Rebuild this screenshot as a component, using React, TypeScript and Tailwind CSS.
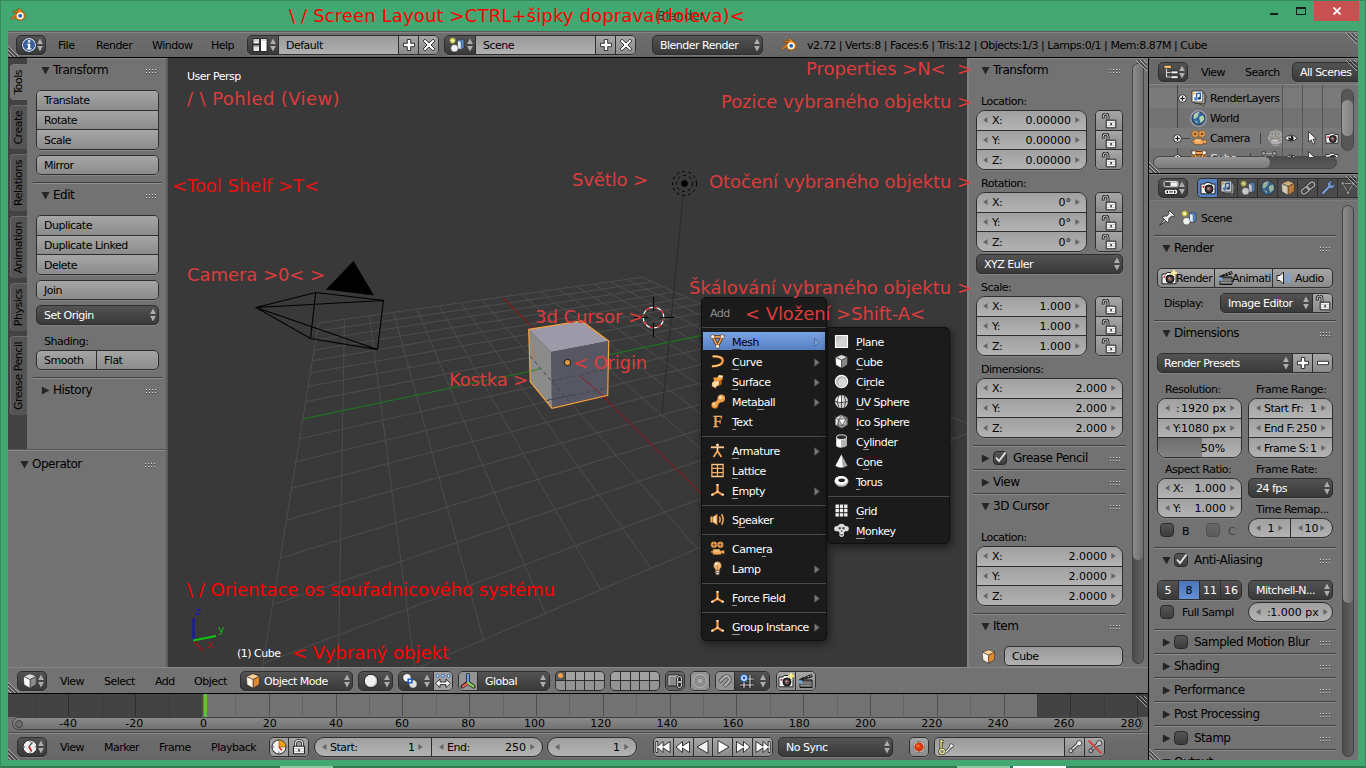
import React, { useLayoutEffect, useRef, useState } from "react";
import clsx from "clsx";

type Kids = { children?: React.ReactNode };

/* ---------- text ---------- */

/* Spreads a line of text over an exact width by measuring it and adjusting the tracking. */
function Fit({ text, w, className }: { text: string; w: number; className?: string }) {
  const ref = useRef<HTMLSpanElement>(null);
  const [ls, setLs] = useState(0);
  useLayoutEffect(() => {
    const el = ref.current;
    if (!el) return;
    el.style.letterSpacing = "0px";
    const natural = el.getBoundingClientRect().width;
    const n = (w - natural) / text.length;
    el.style.letterSpacing = `${n}px`;
    setLs(n);
  }, [text, w]);
  return (
    <span ref={ref} className={clsx("inline-block whitespace-pre", className)} style={{ letterSpacing: `${ls}px` }}>
      {text}
    </span>
  );
}

/* Interface label, set tight; sits one pixel under the optical centre of its row. */
const T = ({ children, className }: Kids & { className?: string }) => (
  <span className={clsx("pt-[2px] whitespace-pre tracking-[-0.5px]", className)}>{children}</span>
);
/* Digits keep their natural advance. */
const N = ({ children, className }: Kids & { className?: string }) => (
  <span className={clsx("pt-[2px] whitespace-pre", className)}>{children}</span>
);

/* ---------- icons ---------- */

const cubeIcon = (a: string, b: string, c: string) => (
  <g stroke="#1a1a1a" strokeWidth=".5" strokeLinejoin="round">
    <path d="M8 .8 14.6 3.2 8.2 6.6 1.4 3.4Z" fill={a} />
    <path d="M1.4 3.4 8.2 6.6V15.2L2 11.8Z" fill={b} />
    <path d="M14.6 3.2 8.2 6.6V15.2L14.2 11.6Z" fill={c} />
  </g>
);

const camBody = (
  <g>
    <path d="M1 4H5L6 2.5H10L11 4H15V13.8H1Z" fill="#f2f2f2" stroke="#222" strokeWidth="1" />
    <path d="M1.5 5.5H14.5V7H1.5Z" fill="#c8c8c8" />
    <circle cx="9" cy="9" r="4" fill="#333" stroke="#111" />
    <circle cx="9" cy="9" r="2" fill="#8a5a5a" />
    <circle cx="8.2" cy="8.2" r=".8" fill="#e6d0d0" />
    <circle cx="3.5" cy="7" r="1" fill="#d22" />
  </g>
);

const clap = (
  <g>
    <path d="M2 7H14V14.5H2Z" fill="#666" stroke="#111" />
    <path d="M2 10H14M2 12.5H14" stroke="#999" strokeWidth=".8" />
    <path d="M1.5 6.5 13.5 1.5 14.2 3.8 2 7Z" fill="#eee" stroke="#111" />
    <path d="M4.5 5.2 6 6M8 3.8 9.5 5M11 2.5 12.5 4" stroke="#111" strokeWidth="1.4" />
    <circle cx="2.5" cy="9" r="2" fill="#7ab4f0" opacity=".8" />
  </g>
);

const empty = (
  <g strokeLinecap="butt">
    <path d="M8 1V9.3L1.6 13.2M8 9.3 14.4 13.2" stroke="#6a3206" strokeWidth="3" fill="none" />
    <path d="M8 1V9.3L1.8 13M8 9.3 14.2 13" stroke="#f9a14a" strokeWidth="2" fill="none" />
    <path d="M7 1H9V3H7ZM1 12 3 10.8 3.8 12.6 1.8 13.8ZM15 12 13 10.8 12.2 12.6 14.2 13.8ZM7 8.2H9V10H7Z" fill="#fff0dc" />
  </g>
);

const movie = (f: string, hole: string) => (
  <g fill={f} stroke="#3a2205" strokeWidth=".4">
    <circle cx="4.2" cy="4" r="3.4" />
    <circle cx="11" cy="4" r="3.4" />
    <path d="M3 8.6H10.8V10.4H12L15.4 9.6V14L12 12.8V14.6H3L3 12.6H1V10.6H3Z" />
    <path d="M4.2 1.6V6.4M1.9 4H6.5M11 1.6V6.4M8.7 4H13.3" stroke={hole} strokeWidth=".7" />
    <circle cx="4.2" cy="4" r="1" fill={hole} stroke="none" />
    <circle cx="11" cy="4" r="1" fill={hole} stroke="none" />
    <path d="M4.5 10H9.5V11.2H4.5Z" fill="#fff" opacity=".45" stroke="none" />
  </g>
);

const sceneIcon = (
  <g stroke="#222" strokeWidth=".5">
    <path d="M8.5 3.5 11 2 15 3V10.8L12.2 12.5 8.5 11.5Z" fill="#4f86d0" />
    <path d="M8.5 3.5 12.2 4.6V12.5L8.5 11.5Z" fill="#e3eefc" />
    <circle cx="5.5" cy="11.2" r="3.8" fill="#f0f0f0" />
    <circle cx="3.6" cy="3.6" r="2.8" fill="#d8d450" stroke="#8a8a30" />
    <circle cx="3.6" cy="3.6" r="1.2" fill="#fffff0" stroke="none" />
  </g>
);

const worldIcon = (
  <g>
    <circle cx="8" cy="8" r="7" fill="#2f66a0" stroke="#222" strokeWidth=".8" />
    <path d="M3 5Q6 1.5 8.5 3L7 6 4.5 8.5 2.4 8Z" fill="#a8cfae" />
    <path d="M9 6 13 4.5 14.2 9 10.5 12.8 9 9Z" fill="#b3d8ae" />
    <path d="M4 10 7 11 6.5 13.7Z" fill="#9cc8a0" />
    <path d="M3.2 4.6A6 6 0 0 1 9 1.8" stroke="#fff" strokeWidth="1.2" fill="none" opacity=".7" />
  </g>
);

const layersIcon = (
  <g stroke="#222" strokeWidth=".8">
    <path d="M6 4 15.4 6 13 15.4 4 12.5Z" fill="#dfc98e" />
    <path d="M4 3H13.8V13.4H4Z" fill="#d0d0d0" />
    <path d="M1 1H11.8V12H1Z" fill="#f8f8f8" />
    <path d="M5.6 8.6V3.6L9.4 3V8" stroke="#2f62a8" strokeWidth="1.4" fill="none" />
    <circle cx="4.8" cy="8.8" r="1.9" fill="#4f86d0" stroke="none" />
    <circle cx="8.4" cy="8.2" r="1.5" fill="#2a3d55" stroke="none" />
    <path d="M2.6 2V5M1.4 3.5H4" stroke="#e4b83a" strokeWidth=".9" />
  </g>
);

const arrowsH = (
  <g>
    <circle cx="2.5" cy="2.8" r="1.5" fill="#dce9fb" stroke="#2f66b8" />
    <circle cx="8" cy="2.8" r="1.5" fill="#dce9fb" stroke="#2f66b8" />
    <circle cx="13.5" cy="2.8" r="1.5" fill="#dce9fb" stroke="#2f66b8" />
    <path d="M.6 10.3 5 6V9H11V6L15.4 10.3 11 14.6V11.6H5V14.6Z" fill="#fff" stroke="#222" strokeWidth=".9" />
  </g>
);

const plusBadge = (
  <g>
    <circle cx="13" cy="3" r="2.8" fill="#f4c83c" opacity=".7" />
    <path d="M13 0V6M10 3H16" stroke="#fff3b0" strokeWidth="1.6" />
  </g>
);

const ICONS: Record<string, React.ReactNode> = {
  info: (
    <g>
      <circle cx="8" cy="8" r="6.6" fill="#3d6299" stroke="#e4e9f2" strokeWidth="1.1" />
      <circle cx="8" cy="8" r="7.4" fill="none" stroke="#1c2430" strokeWidth=".7" />
      <path d="M6.2 6.8H9.2V11.2H10.4V12.6H5.8V11.2H7V8.1H6.2ZM7 3.2H9.2V5.6H7Z" fill="#fff" />
    </g>
  ),
  layout: (
    <g stroke="#111" strokeWidth=".8">
      <path d="M1 1.5H7.5V7H1ZM1 8H7.5V14.5H1Z" fill="#e6e6e6" />
      <path d="M8.5 1.5H15V14.5H8.5Z" fill="#fff" />
      <path d="M2 3H6.5M2 9.5H6.5M9.5 3H14" stroke="#999" />
    </g>
  ),
  scene: sceneIcon,
  world: worldIcon,
  layers: layersIcon,
  plus: <path d="M6.3 2.5H9.7V6.3H13.5V9.7H9.7V13.5H6.3V9.7H2.5V6.3H6.3Z" fill="#fff" stroke="#333" strokeWidth="1" />,
  minus: <path d="M2.5 6.3H13.5V9.7H2.5Z" fill="#fff" stroke="#333" strokeWidth="1" />,
  x: <path d="M4 2.2 8 6 12 2.2 13.9 4 10 8 13.9 12 12 13.8 8 10 4 13.8 2.1 12 6 8 2.1 4Z" fill="#fff" stroke="#333" strokeWidth="1" />,
  blender: (
    <g>
      <path d="M.5 11.6 7.5 5.5H2.8L3.6 4H8.6L7 2.4 9 1.4 14.6 6.2Q16.4 9.5 14 12 10.5 14.6 7 12.6 5.4 11.4 5.3 9.6L2.2 12.4Z" fill="#f28a1c" stroke="#7a3d05" strokeWidth=".6" />
      <circle cx="10.2" cy="8.8" r="3.4" fill="#fff" />
      <circle cx="10.2" cy="8.8" r="1.9" fill="#245a9c" />
    </g>
  ),
  tree: (
    <g>
      <path d="M3.5 4V13H8M3.5 8.5H8" stroke="#ccc" fill="none" strokeWidth="1.2" />
      <path d="M1 1.2H8.5V4.4H1Z" fill="#fbc077" stroke="#222" strokeWidth=".7" />
      <path d="M8 7H15V9.8H8ZM8 11.8H15V14.6H8Z" fill="#f4f4f4" stroke="#222" strokeWidth=".7" />
    </g>
  ),
  props: (
    <g>
      <rect x="1" y="1.5" width="14" height="5.2" rx="1.5" fill="#444" stroke="#ddd" />
      <path d="M7.5 2.2H14.2V6H7.5Z" fill="#eee" />
      <rect x="1" y="9.2" width="14" height="5.4" rx="2.7" fill="#f2f2f2" stroke="#111" />
      <path d="M2.8 11.9 5 10.4V13.4ZM13.2 11.9 11 10.4V13.4Z" fill="#222" />
      <path d="M6 11.9H10" stroke="#222" />
    </g>
  ),
  camera: camBody,
  cameraAdd: <g>{camBody}{plusBadge}</g>,
  clap,
  speaker: (
    <g>
      <path d="M1 5.5H4L7.5 2V14L4 10.5H1Z" fill="#f2f2f2" stroke="#222" />
      <path d="M9.5 5.2Q11 8 9.5 10.8M12 3Q15 8 12 13" stroke="#7aa4dc" strokeWidth="1.8" fill="none" />
    </g>
  ),
  cubeO: cubeIcon("#fbcf96", "#fff2e0", "#dd8a33"),
  cubeW: cubeIcon("#dcdcdc", "#fdfdfd", "#8a8a8a"),
  link: (
    <g fill="none">
      <rect x="1" y="8" width="8.6" height="5" rx="2.5" transform="rotate(-40 5.3 10.5)" stroke="#222" strokeWidth="2.8" />
      <rect x="6.4" y="3.2" width="8.6" height="5" rx="2.5" transform="rotate(-40 10.7 5.7)" stroke="#222" strokeWidth="2.8" />
      <rect x="1" y="8" width="8.6" height="5" rx="2.5" transform="rotate(-40 5.3 10.5)" stroke="#ccc" strokeWidth="1.4" />
      <rect x="6.4" y="3.2" width="8.6" height="5" rx="2.5" transform="rotate(-40 10.7 5.7)" stroke="#ccc" strokeWidth="1.4" />
    </g>
  ),
  wrench: <path d="M1.4 12.4 7.4 6.6Q6.6 3 9.8 1L12.6 1 10.6 4 12.2 5.6 15 3.6Q15.6 7.8 11.6 8.6L9.4 8.6 3.8 14.6Q.8 15 1.4 12.4Z" fill="#86aef0" stroke="#1c2a44" strokeWidth=".8" />,
  meshG: (
    <g>
      <path d="M2.5 3.5H13.5L8 12.5Z" fill="none" stroke="#aaa" />
      <path d="M1 1.8H4.2V5H1ZM11.8 1.8H15V5H11.8ZM6.4 11H9.6V14.2H6.4Z" fill="#bbb" stroke="#222" strokeWidth=".7" />
    </g>
  ),
  pin: (
    <g stroke="#222" strokeWidth=".8">
      <path d="M.6 15.4 6 8.6 7.8 10.4Z" fill="#ddd" />
      <path d="M3 7Q6 5.6 7.6 6.2L10.2 3.4 9 1.4 11 1 15.2 5.2 14.8 7 12.6 6 9.8 8.6Q10.4 11.4 9 13Z" fill="#efefef" />
    </g>
  ),
  lockOpen: (
    <g>
      <path d="M2.2 5.5V3.4A2.4 2.4 0 0 1 7 3.4V8" stroke="#222" strokeWidth="2.8" fill="none" />
      <path d="M2.2 4.8V3.4A2.4 2.4 0 0 1 7 3.4V8" stroke="#ddd" strokeWidth="1" fill="none" />
      <path d="M5.2 7.2H14.8V14.8H5.2Z" fill="#f4f4f4" stroke="#222" />
      <path d="M6 9.6H14M6 12.4H14" stroke="#bdbdbd" strokeWidth=".8" />
      <path d="M9.4 10H10.8V12.2H9.4Z" fill="#222" />
    </g>
  ),
  lock: (
    <g>
      <path d="M4.5 8V4.8A3.4 3.4 0 0 1 11.5 4.8V8" stroke="#222" strokeWidth="2.8" fill="none" />
      <path d="M4.5 8V4.8A3.4 3.4 0 0 1 11.5 4.8V8" stroke="#ddd" strokeWidth="1.2" fill="none" />
      <path d="M2.5 7.2H13.5V14.8H2.5Z" fill="#f0f0f0" stroke="#222" />
      <path d="M3 9.6H13M3 12.4H13" stroke="#bdbdbd" strokeWidth=".8" />
      <path d="M7.3 10H8.7V12.4H7.3Z" fill="#222" />
    </g>
  ),
  sphere: (
    <g>
      <circle cx="8" cy="8" r="6.8" fill="#b5b5b5" stroke="#111" strokeWidth=".8" />
      <circle cx="7.6" cy="7.6" r="5.6" fill="#f0f0f0" />
    </g>
  ),
  pivot: (
    <g stroke="#222" strokeWidth=".7">
      <circle cx="5" cy="4.8" r="4.2" fill="#f4f4f4" />
      <circle cx="11" cy="11" r="4.2" fill="#e2e2e2" />
      <path d="M5.4 5.4H10.6V10.6H5.4Z" fill="#1c62c4" stroke="none" />
      <path d="M7 7H9V9H7Z" fill="#fff" stroke="none" />
    </g>
  ),
  arrowsH,
  axes: (
    <g fill="none" strokeLinecap="round">
      <path d="M8 2V9.5L2.5 13.5M8 9.5 13.5 13.5" stroke="#1a1a1a" strokeWidth="4" />
      <path d="M8 2V9" stroke="#6fa3e8" strokeWidth="2.4" />
      <path d="M8 10 2.8 13.4" stroke="#e25b50" strokeWidth="2.4" />
      <path d="M8.4 10 13.4 13.4" stroke="#8ccf5c" strokeWidth="2.4" />
    </g>
  ),
  lockCam: (
    <g>
      <path d="M1 2H12.4V13H1Z" fill="#8a8a8a" stroke="#222" />
      <path d="M2 12.4V3H12" fill="none" stroke="#c4c4c4" />
      <rect x="10.5" y="3.5" width="4" height="6" rx="2" fill="none" stroke="#222" strokeWidth="2.4" />
      <rect x="10.5" y="8.5" width="4" height="6" rx="2" fill="none" stroke="#222" strokeWidth="2.4" />
      <rect x="10.5" y="3.5" width="4" height="6" rx="2" fill="none" stroke="#ddd" strokeWidth="1" />
      <rect x="10.5" y="8.5" width="4" height="6" rx="2" fill="none" stroke="#ddd" strokeWidth="1" />
    </g>
  ),
  propEdit: (
    <g fill="none" stroke="#b8b8b8">
      <circle cx="8" cy="8" r="6.4" />
      <circle cx="8" cy="8" r="5.2" stroke="#777" strokeWidth=".8" />
      <circle cx="8" cy="8" r="3" fill="#aaa" stroke="#777" strokeWidth=".8" />
    </g>
  ),
  magnet: (
    <g fill="none" transform="rotate(45 8 8)">
      <path d="M4.5 13.5V6.5A3.5 3.5 0 0 1 11.5 6.5V13.5" stroke="#4a4a4a" strokeWidth="4.2" />
      <path d="M4.5 13V6.5A3.5 3.5 0 0 1 11.5 6.5V13" stroke="#b0b0b0" strokeWidth="2.4" />
    </g>
  ),
  snap: (
    <g>
      <path d="M5 2V15M11 2V15M1 6H15M1 12H15" stroke="#111" strokeWidth="2.6" />
      <path d="M5 2V15M11 2V15M1 6H15M1 12H15" stroke="#ddd" strokeWidth="1.2" />
      <circle cx="5" cy="5" r="3.6" fill="#cfe0fa" stroke="#2b66c0" strokeWidth="1.2" />
      <circle cx="5" cy="5" r="1.4" fill="#1c52b4" />
    </g>
  ),
  clock: (
    <g>
      <circle cx="8" cy="8" r="7" fill="#f0f0f0" stroke="#222" />
      <path d="M10.6 3 7 7.6 9.6 12.4" stroke="#555" strokeWidth="1.3" fill="none" />
      <path d="M7 7.6 9.6 12.4" stroke="#d22" strokeWidth="1.6" />
      <path d="M8 1.8V3.3M8 12.7V14.2M1.8 8H3.3M12.7 8H14.2" stroke="#666" />
    </g>
  ),
  clockO: (
    <g>
      <circle cx="8" cy="8" r="7" fill="#f4f4f4" stroke="#222" />
      <path d="M8 8V1.2A6.8 6.8 0 0 1 14.8 8Z" fill="#f6a21c" stroke="#8a5606" strokeWidth=".7" />
      <path d="M8 8 11 11.5" stroke="#d22" strokeWidth="1.5" />
      <path d="M8 12.5V14M2 8H3.5" stroke="#666" />
    </g>
  ),
  first: <path d="M.8 2.5H2.8V7.2L8 2.5V7.2L15 2.5V13.5L8 8.8V13.5L2.8 8.8V13.5H.8Z" fill="#fff" stroke="#222" strokeWidth=".9" />,
  prev: <path d="M1 8 7.5 2.5V7L14.5 2.5V13.5L7.5 9V13.5Z" fill="#fff" stroke="#222" strokeWidth=".9" />,
  back: <path d="M2 8 13 1.5V14.5Z" fill="#f0f0f0" stroke="#222" strokeWidth=".9" />,
  play: <path d="M14 8 3 1.5V14.5Z" fill="#fff" stroke="#222" strokeWidth=".9" />,
  next: <path d="M15 8 8.5 2.5V7L1.5 2.5V13.5L8.5 9V13.5Z" fill="#fff" stroke="#222" strokeWidth=".9" />,
  last: <path d="M15.2 2.5H13.2V7.2L8 2.5V7.2L1 2.5V13.5L8 8.8V13.5L13.2 8.8V13.5H15.2Z" fill="#fff" stroke="#222" strokeWidth=".9" />,
  rec: (
    <g>
      <circle cx="8" cy="8" r="5.6" fill="#fff" stroke="#555" strokeWidth=".6" />
      <circle cx="8" cy="8" r="4.4" fill="#dd3c0a" stroke="#8a2200" strokeWidth=".6" />
      <circle cx="7" cy="7" r="1.6" fill="#ff7a4a" opacity=".8" />
    </g>
  ),
  keying: (
    <g>
      <path d="M3 .6V11M3 2.4H5.6" stroke="#333" strokeWidth="3" />
      <path d="M3 .8V11M3 2.4H5.4" stroke="#f0e88a" strokeWidth="1.4" />
      <circle cx="4" cy="12.6" r="2.6" fill="#888" stroke="#333" strokeWidth="2.2" />
      <circle cx="4" cy="12.6" r="2.4" fill="#888" stroke="#f0e88a" strokeWidth="1.2" />
      <path d="M8 13 13.5 7" stroke="#333" strokeWidth="3" />
      <circle cx="13.4" cy="6.8" r="2" fill="#eee" stroke="#333" strokeWidth=".8" />
      <path d="M8 13 13.5 7" stroke="#eee" strokeWidth="1.4" />
    </g>
  ),
  key: (
    <g>
      <path d="M3.5 12 12 4" stroke="#333" strokeWidth="3.4" />
      <circle cx="12.2" cy="4.2" r="2.6" fill="#eee" stroke="#333" strokeWidth=".9" />
      <path d="M3.5 12 12 4" stroke="#eee" strokeWidth="1.7" />
      <circle cx="3.8" cy="11.8" r="2" fill="#ccc" stroke="#333" strokeWidth=".9" />
    </g>
  ),
  keyX: (
    <g>
      <path d="M3.5 12 12 4" stroke="#333" strokeWidth="3.4" />
      <circle cx="12.2" cy="4.2" r="2.6" fill="#ccc" stroke="#333" strokeWidth=".9" />
      <path d="M3.5 12 12 4" stroke="#ccc" strokeWidth="1.7" />
      <circle cx="3.8" cy="11.8" r="2" fill="#aaa" stroke="#333" strokeWidth=".9" />
      <path d="M1.5 1.5 14.5 14.5" stroke="#d64040" strokeWidth="1.8" />
    </g>
  ),
  /* add menu */
  Mesh: (
    <g>
      <path d="M3 3H13L8 12.8Z" fill="none" stroke="#5a2a06" strokeWidth="3.4" />
      <path d="M3 3H13L8 12.8Z" fill="none" stroke="#f2a35a" strokeWidth="1.8" />
      <path d="M1 1H4.6V4.6H1ZM11.4 1H15V4.6H11.4ZM6.2 11.4H9.8V15H6.2Z" fill="#fff" stroke="#6b3a10" strokeWidth=".6" />
    </g>
  ),
  Curve: (
    <g fill="none">
      <path d="M2.8 2.6Q13.8 2.2 13.6 7.4 13 12.8 2 13.2" stroke="#7a4210" strokeWidth="3.2" />
      <path d="M2.8 2.6Q13.8 2.2 13.6 7.4 13 12.8 2 13.2" stroke="#fba84e" strokeWidth="2" />
      <path d="M3 2.4Q11 2.2 12.6 4.6M2.4 13Q8 12.8 10.6 11.4" stroke="#ffe2bd" strokeWidth=".9" />
    </g>
  ),
  Surface: (
    <g stroke="#7a4210" strokeWidth=".4">
      <path d="M3.6 3.4Q8.8 4.4 9.4 1.2L13.8 1.8Q14.4 6.6 10.6 7.6L9.8 10 4.4 8.2Z" fill="#f7a23e" />
      <path d="M2.2 9Q4.4 6.4 10.2 7.2L9.8 12.4Q6.8 11.8 6 15.2L2 13Z" fill="#ffd9a6" />
      <path d="M9.4 1.2 13.8 1.8 13 3.4 9 3.4Z" fill="#fff0dc" stroke="none" />
      <path d="M10.4 7.4 12.6 7 12.2 11 9.8 12.4Z" fill="#c66c12" />
    </g>
  ),
  Metaball: (
    <g stroke="#7a4210" strokeWidth=".4">
      <path d="M8 4.6Q7.6 8 5.2 8.2A3.6 3.6 0 1 0 8.6 12.4Q8.8 9.6 11.6 8.8A4.2 4.2 0 1 0 8 4.6Z" fill="#f2a04a" />
      <circle cx="11" cy="3.8" r="1.9" fill="#ffe2bd" stroke="none" />
      <circle cx="4.2" cy="10.6" r="1.6" fill="#ffd5a3" stroke="none" />
    </g>
  ),
  Armature: (
    <g fill="none" strokeLinejoin="round">
      <path d="M1 4.6H15M8 5V8.6L3.8 15M8 8.6 12.2 15" stroke="#f2a458" strokeWidth="2" />
      <circle cx="8" cy="2" r="1.6" fill="#ffd9a6" stroke="none" />
      <path d="M1 4.4H15M8 5V8.4" stroke="#ffe9cf" strokeWidth=".9" />
    </g>
  ),
  Lattice: (
    <g fill="none">
      <path d="M2 1.6H14V14.4H2ZM8 1.6V14.4M2 5.8H14M2 10.2H14" stroke="#f5ab63" strokeWidth="1.4" />
      <path d="M2 1.6H14M8 5.8V10.2M2 14.4H14" stroke="#ffe2bd" strokeWidth=".6" />
    </g>
  ),
  Empty: empty,
  Speaker: (
    <g>
      <path d="M.4 4.8H3V11.2H.4ZM3.4 5 7.8 1.8V14.2L3.4 11Z" fill="#fbb060" stroke="#8a4a10" strokeWidth=".4" />
      <path d="M3.6 5.4 6 3.6V12.4L3.6 10.6Z" fill="#ffe2bd" />
      <path d="M10 4.8Q11.6 8 10 11.2M12.4 2.4Q15.6 8 12.4 13.6" stroke="#f2a458" strokeWidth="1.7" fill="none" />
    </g>
  ),
  Camera: movie("#f3a95c", "#7a4a18"),
  cameraGrey: (
    <g>
      <circle cx="8" cy="8" r="8" fill="#a6a6a6" />
      <g opacity=".7">{movie("#b4b4b4", "#777")}</g>
    </g>
  ),
  meshActive: (
    <g>
      <circle cx="8" cy="8" r="8" fill="#b07a48" />
      <path d="M3 3H13L8 12.8Z" fill="none" stroke="#5a2a06" strokeWidth="3.4" />
      <path d="M3 3H13L8 12.8Z" fill="none" stroke="#f2a35a" strokeWidth="1.8" />
      <path d="M1 1H4.6V4.6H1ZM11.4 1H15V4.6H11.4Z" fill="#fff" stroke="#6b3a10" strokeWidth=".6" />
    </g>
  ),
  Lamp: (
    <g stroke="#7a4210" strokeWidth=".4">
      <path d="M8 .4A4.4 4.4 0 0 1 10.6 8.2L10.2 10H5.8L5.4 8.2A4.4 4.4 0 0 1 8 .4Z" fill="#f1b678" />
      <path d="M6 10.3H10V13.4L9 15H7L6 13.4Z" fill="#efe4d4" />
      <path d="M6 12.2H10M6.4 14H9.6" stroke="#555" strokeWidth=".8" />
      <path d="M8 9.6V6L7 4.6M8 6 9 4.6" stroke="#8a4a10" fill="none" />
      <circle cx="6.6" cy="3" r="1.3" fill="#fff" stroke="none" />
    </g>
  ),
  Plane: (
    <g>
      <path d="M1.6 1.6H14.4V14.4H1.6Z" fill="#d4d4d4" stroke="#fff" strokeWidth="1.2" />
      <path d="M2.4 2.4H9L2.4 9Z" fill="#c2c2c2" />
    </g>
  ),
  Cube: cubeIcon("#dadada", "#fff", "#8a8a8a"),
  Circle: (
    <g>
      <circle cx="8" cy="8" r="6.6" fill="#bcbcbc" stroke="#fff" strokeWidth="1.2" />
      <circle cx="9" cy="9" r="4.4" fill="#d8d8d8" />
    </g>
  ),
  UV: (
    <g>
      <circle cx="8" cy="8" r="7" fill="#d0d0d0" />
      <circle cx="5.8" cy="5.8" r="3" fill="#fff" />
      <path d="M1 8Q8 10.6 15 8M8 1V15M5 1.8Q2 8 5 14.2M11 1.8Q14 8 11 14.2" stroke="#2a2a2a" strokeWidth=".8" fill="none" />
    </g>
  ),
  Ico: (
    <g stroke="#3a3a3a" strokeWidth=".6" strokeLinejoin="round">
      <path d="M8 .6 14.6 4.2V11.8L8 15.4 1.4 11.8V4.2Z" fill="#b4b4b4" />
      <path d="M1.4 4.2 8 .6 5 6 4 12 1.4 11.8Z" fill="#e6e6e6" />
      <path d="M5 6 12.4 4.8 9 12Z" fill="#fff" />
      <path d="M8 .6 12.4 4.8 14.6 4.2M12.4 4.8 14.6 11.8 9 12 8 15.4 4 12 5 6M4 12 9 12M1.4 4.2 5 6" fill="none" />
    </g>
  ),
  Cylinder: (
    <g>
      <path d="M2.2 3.4V12.8Q8 16.4 13.8 12.8V3.4Z" fill="#b4b4b4" />
      <path d="M2.8 4V13Q5 14.4 7.4 14.5V5Z" fill="#fff" />
      <ellipse cx="8" cy="3.4" rx="5.4" ry="2.5" fill="#2c2c2c" stroke="#f0f0f0" strokeWidth="1" />
    </g>
  ),
  Cone: (
    <g>
      <path d="M8 .4 14.4 12.4Q8 16.6 1.6 12.4Z" fill="#a8a8a8" />
      <path d="M8 .4 9.4 14.4Q4.6 14.6 1.6 12.4Z" fill="#fafafa" />
    </g>
  ),
  Torus: (
    <g>
      <ellipse cx="8" cy="7.8" rx="7.4" ry="5.8" fill="#b8b8b8" />
      <ellipse cx="7.6" cy="6.8" rx="6.8" ry="4.6" fill="#fff" />
      <ellipse cx="8.2" cy="6.6" rx="3.6" ry="1.9" fill="#222" />
    </g>
  ),
  Grid: <path d="M1.6 1.6H5.2V5.2H1.6ZM6.2 1.6H9.8V5.2H6.2ZM10.8 1.6H14.4V5.2H10.8ZM1.6 6.2H5.2V9.8H1.6ZM6.2 6.2H9.8V9.8H6.2ZM10.8 6.2H14.4V9.8H10.8ZM1.6 10.8H5.2V14.4H1.6ZM6.2 10.8H9.8V14.4H6.2ZM10.8 10.8H14.4V14.4H10.8Z" fill="#efefef" />,
  Monkey: (
    <g fill="#dcdcdc">
      <circle cx="3" cy="6" r="2.8" />
      <circle cx="13" cy="6" r="2.8" />
      <path d="M3.6 4Q5 .8 8 .8T12.4 4V8L10.6 10V13.6Q8 16.2 5.8 13.6V10L3.6 8Z" />
      <path d="M5 4.6H7.2V6.6H5ZM9 4.6H11.2V6.6H9ZM7.4 8H8.8V9.4H7.4ZM6.8 12H9.6V13H6.8Z" fill="#3a3a3a" />
    </g>
  ),
  eye: (
    <g>
      <path d="M.8 8.5Q8 .6 15.2 8.5 8 14.4 .8 8.5Z" fill="#f2f2f2" stroke="#222" />
      <circle cx="8" cy="8.2" r="3" fill="#222" />
      <circle cx="7" cy="7" r="1" fill="#fff" />
    </g>
  ),
  cursor: <path d="M4 .6V12.6L7 10.2 9 15 11.4 14 9.2 9.4H13Z" fill="#f2f2f2" stroke="#222" strokeWidth=".9" />,
};

const Icon = ({ n, s = 16, className }: { n: string; s?: number; className?: string }) => (
  <svg viewBox="0 0 16 16" width={s} height={s} className={clsx("shrink-0", className)}>
    {ICONS[n]}
  </svg>
);

const UpDown = () => (
  <svg viewBox="0 0 6 14" width="6" height="14" className="shrink-0">
    <path d="M3 .5 5.9 6H.1ZM3 13.5 .1 8H5.9Z" fill="#adadad" />
  </svg>
);
const Left = () => (
  <svg viewBox="0 0 5 6" width="5" height="6" className="shrink-0"><path d="M0 3 4.5 .1V5.9Z" fill="#666" /></svg>
);
const Right = () => (
  <svg viewBox="0 0 5 6" width="5" height="6" className="shrink-0"><path d="M4.8 3 .3 .1V5.9Z" fill="#666" /></svg>
);

/* ---------- widgets ---------- */

const TOOL = "bg-linear-to-b from-[#a6a6a6] to-[#8b8b8b]";
const NUM = "bg-linear-to-b from-[#a0a0a0] to-[#b3b3b3]";
const FIELD = "bg-linear-to-b from-[#999] to-[#b1b1b1]";
const DARK = "bg-linear-to-b from-[#535353] to-[#393939] text-white";
const BOX = "border border-[#2e2e2e] overflow-hidden flex shadow-[0_1px_0_rgba(255,255,255,0.13)] box-border shrink-0";

const Stack = ({ rows, className }: { rows: React.ReactNode[]; className?: string }) => (
  <div className={clsx(BOX, "flex-col rounded-[5px]", className)}>
    {rows.map((r, i) => (
      <div key={i} className={clsx("flex flex-1 items-center", TOOL, i < rows.length - 1 && "border-b border-[#2e2e2e]")}>
        {r}
      </div>
    ))}
  </div>
);

const ToolBtn = ({ children }: Kids) => <T className="pl-[7px]">{children}</T>;

type NumRow = { l: string; v: string };
const Nums = ({ rows, className }: { rows: NumRow[]; className?: string }) => (
  <div className={clsx(BOX, "flex-col rounded-[9px]", className)}>
    {rows.map((r, i) => (
      <div key={i} className={clsx("flex flex-1 items-center px-[6px]", NUM, i < rows.length - 1 && "border-b border-[#2e2e2e]")}>
        <Left />
        <T className="ml-[4px]">{r.l}</T>
        <N className="mr-[4px] ml-auto">{r.v}</N>
        <Right />
      </div>
    ))}
  </div>
);

const Locks = () => (
  <Stack
    className="h-[60px] w-[28px]"
    rows={[0, 1, 2].map((i) => <Icon key={i} n="lockOpen" s={16} className="mt-px ml-[5px]" />)}
  />
);

const Menu = ({ children, className, icon }: Kids & { className?: string; icon?: string }) => (
  <div className={clsx(BOX, DARK, "h-[20px] items-center rounded-[5px] pr-[2px]", icon ? "pl-[4px]" : "pl-[7px]", className)}>
    {icon && <Icon n={icon} />}
    <T className={clsx("flex-1 overflow-hidden", icon && children ? "pl-[3px]" : "")}>{children}</T>
    <UpDown />
  </div>
);

const Check = ({ on, dim }: { on?: boolean; dim?: boolean }) => (
  <span className={clsx("flex h-[14px] w-[14px] shrink-0 items-center justify-center rounded-[4px] border bg-linear-to-b", dim ? "border-[#4e4e4e] from-[#666] to-[#5c5c5c]" : "border-[#2a2a2a] from-[#555] to-[#3d3d3d]")}>
    {on && (
      <svg viewBox="0 0 14 14" width="14" height="14" className="shrink-0 overflow-visible">
        <path d="M3 6.5 6 10 12.5 1.5" stroke="#e6e6e6" strokeWidth="1.9" fill="none" />
      </svg>
    )}
  </span>
);

const Grip = () => (
  <svg viewBox="0 0 11 5" width="11" height="5" className="shrink-0">
    {[0, 3, 6, 9].map((x) => (
      <g key={x}>
        <path d={`M${x} 0h1v1h-1zM${x} 3h1v1h-1z`} fill="#d8d8d8" />
        <path d={`M${x} 1h1v1h-1zM${x} 4h1v1h-1z`} fill="#444" />
      </g>
    ))}
  </svg>
);

const Head = ({ title, open, check, className }: { title: string; open?: boolean; check?: "on" | "off"; className?: string }) => (
  <div className={clsx("flex h-[22px] shrink-0 items-center text-[12px]", className)}>
    <svg viewBox="0 0 10 10" width="9" height="9" className="shrink-0">
      <path d={open ? "M.5 1H9.5L5 9.5Z" : "M1 .5V9.5L9.5 5Z"} fill="#262626" />
    </svg>
    <span className="w-[3px] shrink-0" />
    {check && <span className="mr-[6px] flex"><Check on={check === "on"} /></span>}
    <span className="flex-1 leading-[22px] tracking-[-0.5px] whitespace-pre">{title}</span>
    <span className="flex pt-[2px]"><Grip /></span>
  </div>
);

const Rule = () => <div className="h-[2px] shrink-0 border-t border-[#404040] bg-[#8e8e8e]" />;
const Label = ({ children, className }: Kids & { className?: string }) => (
  <div className={clsx("flex h-[20px] shrink-0 items-center pl-[8px]", className)}><T className="pt-[4px]">{children}</T></div>
);

const EditorSwitch = ({ icon, className }: { icon: string; className?: string }) => (
  <Menu icon={icon} className={clsx("w-[30px]", className)} />
);

const IconBtn = ({ n, className, s = 16 }: { n: string; className?: string; s?: number }) => (
  <div className={clsx("flex h-full shrink-0 items-center justify-center", className ?? `w-[20px] ${TOOL}`)}>
    <Icon n={n} s={s} />
  </div>
);
const Sep = () => <div className="h-full w-px shrink-0 bg-[#2e2e2e]" />;

const IdBlock = ({ icon, name, className }: { icon: string; name: string; className?: string }) => (
  <div className={clsx(BOX, "h-[20px] w-[192px] rounded-[5px]", className)}>
    <div className={clsx("flex w-[30px] shrink-0 items-center pl-[4px]", DARK)}>
      <Icon n={icon} /><span className="ml-[2px] flex"><UpDown /></span>
    </div>
    <Sep />
    <div className={clsx("flex flex-1 items-center pl-[7px]", FIELD)}><T>{name}</T></div>
    <Sep /><IconBtn n="plus" className={clsx("w-[19px]", TOOL)} /><Sep /><IconBtn n="x" className={clsx("w-[19px]", TOOL)} />
  </div>
);

/* ---------- info header ---------- */

const InfoBar = () => (
  <div className="flex h-[26px] shrink-0 items-center border-t border-b border-t-[#868686] border-b-black bg-linear-to-b from-[#6e6e6e] to-[#666] pl-[8px]">
    <EditorSwitch icon="info" />
    <T className="ml-[12px] w-[38px]">File</T>
    <T className="w-[56px]">Render</T>
    <T className="w-[59px]">Window</T>
    <T className="w-[36px]">Help</T>
    <IdBlock icon="layout" name="Default" />
    <IdBlock icon="scene" name="Scene" className="ml-[5px]" />
    <Menu className="ml-[16px] w-[111px]">Blender Render</Menu>
    <Icon n="blender" className="ml-[18px]" />
    <Fit className="ml-[10px] pt-[2px]" w={400} text="v2.72 | Verts:8 | Faces:6 | Tris:12 | Objects:1/3 | Lamps:0/1 | Mem:8.87M | Cube" />
  </div>
);

/* ---------- tool shelf ---------- */

const TABS = [
  { t: "Tools", c: "h-[36px] bg-[#727272]" },
  { t: "Create", c: "h-[44px] bg-[#545454]" },
  { t: "Relations", c: "h-[57px] bg-[#545454]" },
  { t: "Animation", c: "h-[62px] bg-[#545454]" },
  { t: "Physics", c: "h-[48px] bg-[#545454]" },
  { t: "Grease Pencil", c: "h-[79px] bg-[#545454]" },
];

const ToolShelf = () => (
  <div className="flex w-[160px] shrink-0 flex-col border-r-2 border-[#5c5c5c] bg-[#727272]">
    <div className="flex h-[392px] shrink-0">
      <div className="flex w-[19px] shrink-0 flex-col gap-[5px] bg-[#424242] pt-[6px] pl-[2px]">
        {TABS.map((t) => (
          <div key={t.t} className={clsx("flex shrink-0 items-center justify-center rounded-l-[4px] border-t border-l border-[#7c7c7c]/60", t.c)}>
            <span className="rotate-180 tracking-[-0.5px] whitespace-pre [writing-mode:vertical-rl]">{t.t}</span>
          </div>
        ))}
      </div>
      <div className="flex flex-1 flex-col border-t border-[#868686] pr-[4px] pl-[6px]">
        <Head open title="Transform" className="pr-[5px] pl-[8px]" />
        <div className="mt-[9px] flex flex-col gap-[5px] px-[3px]">
          <Stack className="h-[60px]" rows={["Translate", "Rotate", "Scale"].map((s) => <ToolBtn key={s}>{s}</ToolBtn>)} />
          <Stack className="h-[20px]" rows={[<ToolBtn key="m">Mirror</ToolBtn>]} />
        </div>
        <div className="h-[7px] shrink-0" />
        <Rule />
        <Head open title="Edit" className="pr-[5px] pl-[8px]" />
        <div className="mt-[9px] flex flex-col gap-[5px] px-[3px]">
          <Stack className="h-[60px]" rows={["Duplicate", "Duplicate Linked", "Delete"].map((s) => <ToolBtn key={s}>{s}</ToolBtn>)} />
          <Stack className="h-[20px]" rows={[<ToolBtn key="j">Join</ToolBtn>]} />
          <Menu>Set Origin</Menu>
        </div>
        <Label className="mt-[5px] ml-[3px]">Shading:</Label>
        <div className={clsx(BOX, TOOL, "mx-[3px] h-[20px] items-center rounded-[5px]")}>
          <T className="w-[59px] pl-[7px]">Smooth</T><Sep /><T className="pl-[7px]">Flat</T>
        </div>
        <div className="h-[7px] shrink-0" />
        <Rule />
        <Head title="History" className="pr-[5px] pl-[8px]" />
      </div>
    </div>
    <div className="flex flex-1 flex-col border-t border-[#8a8a8a] shadow-[0_-1px_0_#555]">
      <Head open title="Operator" className="mt-[2px] pr-[10px] pl-[12px]" />
    </div>
  </div>
);

/* ---------- viewport ---------- */

/* Floor plane projection: grid units to screen. */
function floor(X: number, Y: number): [number, number] {
  const u = (X + 8) / 16;
  const v = -Y / 8;
  const d = 1 - 0.6056 * u - 0.1347 * v;
  return [(502 - 210.5 * u - 226.4 * v) / d, (297 - 87.6 * u - 17.5 * v) / d];
}
const seg = (x1: number, y1: number, x2: number, y2: number) => {
  const [a, b] = floor(x1, y1);
  const [c, d] = floor(x2, y2);
  return `M${a.toFixed(1)} ${b.toFixed(1)}L${c.toFixed(1)} ${d.toFixed(1)}`;
};
const GRID = Array.from({ length: 17 }, (_, i) => i - 8)
  .filter((i) => i !== 0)
  .map((i) => seg(i, -8, i, 8) + seg(-8, i, 8, i))
  .join("");

const Viewport = () => (
  <div className="relative flex-1 overflow-hidden bg-[#393939]">
    <svg viewBox="168 58 799 609" width="799" height="609" className="block" fill="none">
      <path d={GRID} stroke="#4d4d4d" />
      <path d={seg(0, -8, 0, 8)} stroke="#1b7a1b" strokeWidth="1.1" />
      <path d={seg(-8, 0, 8, 0)} stroke="#7f1a1a" strokeWidth="1.1" />
      <path d="M683 196 662 414" stroke="#2b2b2b" />
      <path d="M528.7 329.3 581.7 321 608.7 341 551.3 352Z" fill="#9c9aa8" />
      <path d="M528.7 329.3 551.3 352 552 408.3 530.3 381.7Z" fill="#8b8b8b" />
      <path d="M551.3 352 608.7 341 607.7 395.3 552 408.3Z" fill="#575763" />
      <path d="M530 371.5 540 368.5" stroke="#1f8a1f" />
      <path d="M552 381 608 369M545 401 608 388M530 356 571 404M548 400 575 394" stroke="#44444e" strokeDasharray="4 3" />
      <path d="M580 376 608 400" stroke="#8a1c22" />
      <path d="M528.7 329.3 581.7 321 608.7 341 607.7 395.3 552 408.3 530.3 381.7Z" stroke="#f7a23a" strokeWidth="1.2" />
      <circle cx="567.5" cy="362.5" r="3.2" fill="#dd9a45" stroke="#111" />
      <g stroke="#000">
        <path d="M256 307.5 315.7 292.5 383.5 300.5 377.5 349.5 310.5 338.5ZM256 307.5 383.5 300.5M256 307.5 377.5 349.5M315.7 292.5 310.5 338.5" strokeWidth="1.1" />
        <path d="M353.5 261 326 289.5 374 295.5Z" fill="#000" stroke="none" />
        <circle cx="684.5" cy="183.5" r="3" fill="#000" />
        <circle cx="684.5" cy="183.5" r="8" strokeDasharray="3 3" />
        <circle cx="684.5" cy="183.5" r="12" strokeDasharray="3 3" />
      </g>
      <circle cx="653.5" cy="317.5" r="10.3" stroke="#fff" strokeWidth="1.1" />
      <circle cx="653.5" cy="317.5" r="10.3" stroke="#e00" strokeWidth="1.1" strokeDasharray="4 4" />
      <path d="M653.5 297V311M653.5 323V337M634 317.5H648M660 317.5H674" stroke="#000" />
      <path d="M193.5 618V641" stroke="#1212c8" strokeWidth="2" />
      <path d="M193 640.5 216 636" stroke="#12c412" strokeWidth="2" />
      <path d="M194 641.5 203 650.5" stroke="#b01414" strokeWidth="1.2" />
    </svg>
    <span className="absolute top-[547px] left-[27px] text-[11px] leading-[13px] text-[#1414c8]">z</span>
    <span className="absolute top-[565px] left-[50px] text-[11px] leading-[13px] text-[#12b412]">y</span>
    <span className="absolute top-[580px] left-[39px] text-[11px] leading-[13px] text-[#a01818]">x</span>
    <T className="absolute top-[10px] left-[19px] leading-[14px] text-white">User Persp</T>
    <T className="absolute top-[587px] left-[69px] leading-[14px] text-white">(1) Cube</T>
  </div>
);

/* ---------- N panel ---------- */

const XYZ = (v: string): NumRow[] => ["X:", "Y:", "Z:"].map((l) => ({ l, v }));

const Scroll = ({ className, thumb }: { className: string; thumb: string }) => (
  <div className={clsx("shrink-0 rounded-full border border-[#434343] bg-linear-to-r from-[#4c4c4c] to-[#606060]", className)}>
    <div className={clsx("rounded-full bg-linear-to-r from-[#8c8c8c] to-[#6f6f6f]", thumb)} />
  </div>
);

const NPanel = () => (
  <div className="flex w-[181px] shrink-0 border-t border-l-2 border-t-[#868686] border-l-[#808080] bg-[#727272]">
    <div className="flex h-[608px] w-[163px] flex-col overflow-hidden pr-[6px] pl-[4px]">
      <Head open title="Transform" className="pr-[5px] pl-[8px]" />
      <div className="h-[9px] shrink-0" />
      <Label>Location:</Label>
      <div className="flex shrink-0 gap-[8px] pl-[3px]"><Nums className="h-[60px] w-[111px]" rows={XYZ("0.00000")} /><Locks /></div>
      <Label className="mt-[2px]">Rotation:</Label>
      <div className="flex shrink-0 gap-[8px] pl-[3px]"><Nums className="h-[60px] w-[111px]" rows={XYZ("0°")} /><Locks /></div>
      <Menu className="mt-[2px] ml-[3px] w-[147px]">XYZ Euler</Menu>
      <Label className="mt-[2px]">Scale:</Label>
      <div className="flex shrink-0 gap-[8px] pl-[3px]"><Nums className="h-[60px] w-[111px]" rows={XYZ("1.000")} /><Locks /></div>
      <Label className="mt-[2px]">Dimensions:</Label>
      <Nums className="ml-[3px] h-[60px] w-[147px]" rows={XYZ("2.000")} />
      <div className="h-[7px] shrink-0" />
      <Rule />
      <Head title="Grease Pencil" check="on" className="pr-[5px] pl-[8px]" />
      <Rule />
      <Head title="View" className="pr-[5px] pl-[8px]" />
      <Rule />
      <Head open title="3D Cursor" className="pr-[5px] pl-[8px]" />
      <div className="h-[9px] shrink-0" />
      <Label>Location:</Label>
      <Nums className="ml-[3px] h-[60px] w-[147px]" rows={XYZ("2.0000")} />
      <div className="h-[7px] shrink-0" />
      <Rule />
      <Head open title="Item" className="pr-[5px] pl-[8px]" />
      <div className="mt-[9px] flex shrink-0 items-center pl-[8px]">
        <Icon n="cubeO" s={15} />
        <div className={clsx(BOX, FIELD, "ml-[8px] h-[20px] w-[119px] items-center rounded-[5px] pl-[7px]")}><T>Cube</T></div>
      </div>
    </div>
    <Scroll className="mt-[4px] h-[601px] w-[12px]" thumb="h-[496px]" />
  </div>
);

/* ---------- 3D view header ---------- */

const Layers = ({ dot, className }: { dot?: boolean; className?: string }) => (
  <div className={clsx("grid h-[20px] w-[50px] shrink-0 grid-cols-5 grid-rows-2 gap-px overflow-hidden rounded-[5px] border border-[#2e2e2e] bg-[#2e2e2e]", className)}>
    {Array.from({ length: 10 }, (_, i) => (
      <div key={i} className={clsx("flex items-center justify-center", dot && i === 0 ? "bg-[#5a5a5a]" : i < 5 ? "bg-[#a2a2a2]" : "bg-[#949494]")}>
        {dot && i === 0 && <span className="h-[5px] w-[5px] rounded-full bg-[#f2a24a]" />}
      </div>
    ))}
  </div>
);

const ViewHeader = () => (
  <div className="flex h-[27px] shrink-0 items-center border-t border-b border-t-[#888] border-b-black bg-[#727272] pl-[9px]">
    <EditorSwitch icon="cubeW" />
    <T className="ml-[13px] w-[44px]">View</T>
    <T className="w-[51px]">Select</T>
    <T className="w-[39px]">Add</T>
    <T className="w-[46px]">Object</T>
    <Menu icon="cubeO" className="w-[113px]">Object Mode</Menu>
    <Menu icon="sphere" className="ml-[5px] w-[35px]" />
    <div className={clsx(BOX, "ml-[5px] h-[20px] w-[55px] rounded-[5px]")}>
      <div className={clsx("flex w-[34px] shrink-0 items-center justify-between pr-[3px] pl-[3px]", DARK)}><Icon n="pivot" /><UpDown /></div>
      <Sep /><IconBtn n="arrowsH" className="w-[18px] bg-[#a0a0a0]" />
    </div>
    <div className={clsx(BOX, "ml-[5px] h-[20px] w-[92px] rounded-[5px]")}>
      <IconBtn n="axes" className="w-[18px] bg-[#949494]" /><Sep />
      <div className={clsx("flex flex-1 items-center justify-between pr-[3px] pl-[7px]", DARK)}><T>Global</T><UpDown /></div>
    </div>
    <Layers dot className="ml-[5px]" />
    <Layers className="ml-[5px]" />
    <div className={clsx(BOX, "ml-[5px] h-[20px] w-[20px] rounded-[5px]")}><IconBtn n="lockCam" className="w-[18px] bg-[#636363]" /></div>
    <div className={clsx(BOX, "ml-[5px] h-[20px] w-[20px] rounded-[5px]")}><IconBtn n="propEdit" className="w-[18px] bg-[#949494]" /></div>
    <div className={clsx(BOX, "ml-[5px] h-[20px] w-[55px] rounded-[5px]")}>
      <IconBtn n="magnet" s={15} className="w-[18px] bg-[#949494]" /><Sep />
      <div className={clsx("flex flex-1 items-center justify-between pr-[3px] pl-[4px]", DARK)}><Icon n="snap" /><UpDown /></div>
    </div>
    <div className={clsx(BOX, "ml-[6px] h-[20px] w-[40px] rounded-[5px]")}>
      <IconBtn n="cameraAdd" className={clsx("w-[18px]", TOOL)} /><Sep /><IconBtn n="clap" className={clsx("w-[19px]", TOOL)} />
    </div>
  </div>
);

/* ---------- timeline ---------- */

const TICKS = Array.from({ length: 17 }, (_, i) => -40 + i * 20);
const MINOR = Array.from({ length: 34 }, (_, i) => -50 + i * 10);

const tickLeft = (t: number) => (t === 280 ? 1103 : 175.5 + t * 3.31 - (t < 0 ? 3 : 0));

const Timeline = () => (
  <div className="relative h-[40px] shrink-0 overflow-hidden bg-[#727272]">
    <svg viewBox="8 694 1140 23" width="1140" height="23" className="block">
      <path d="M8 694H202V717H8ZM1037 694H1148V717H1037Z" fill="#434343" />
      {MINOR.map((t) => (
        <path key={t} d={`M${Math.round(202 + t * 3.34) + 0.5} 694V716`} stroke="#000" strokeOpacity={t % 20 ? 0.12 : 0.3} />
      ))}
      <path d="M204 694H207V717H204Z" fill="#5fc33c" />
    </svg>
    <div className="mx-[4px] h-[13px] w-[1131px] rounded-full border border-[#404040] bg-linear-to-b from-[#8a8a8a] to-[#717171]">
      <div className="mt-[2px] ml-[2px] h-[8px] w-[8px] rounded-full border border-[#444] bg-[#6b6b6b]" />
    </div>
    <div className="mt-[2px] h-px bg-[#505050]" />
    <div className="h-px bg-[#868686]" />
    {TICKS.map((t) => (
      <span key={t} className="absolute top-[23px] w-[40px] text-center leading-[14px]" style={{ left: tickLeft(t) }}>
        {t}
      </span>
    ))}
  </div>
);

const TimelineHeader = () => (
  <div className="flex h-[26px] shrink-0 items-center bg-linear-to-b from-[#6e6e6e] to-[#666] pl-[9px]">
    <EditorSwitch icon="clock" />
    <T className="ml-[13px] w-[44px]">View</T>
    <T className="w-[55px]">Marker</T>
    <T className="w-[52px]">Frame</T>
    <T className="w-[58px]">Playback</T>
    <div className={clsx(BOX, "h-[20px] w-[40px] rounded-[5px]")}>
      <IconBtn n="clockO" className="w-[18px] bg-[#a0a0a0]" /><Sep /><IconBtn n="lock" className={clsx("w-[19px]", TOOL)} />
    </div>
    <div className={clsx(BOX, NUM, "ml-[5px] h-[20px] w-[229px] items-center rounded-[10px]")}>
      <div className="flex w-[116px] items-center pr-[8px] pl-[7px]"><Left /><T className="ml-[3px]">Start:</T><N className="mr-[3px] ml-auto">1</N><Right /></div>
      <Sep />
      <div className="flex flex-1 items-center pr-[7px] pl-[7px]"><Left /><T className="ml-[3px]">End:</T><N className="mr-[4px] ml-auto">250</N><Right /></div>
    </div>
    <div className={clsx(BOX, NUM, "ml-[4px] h-[20px] w-[90px] items-center rounded-[10px] px-[7px]")}>
      <Left /><N className="mr-[4px] ml-auto">1</N><Right />
    </div>
    <div className={clsx(BOX, "ml-[16px] h-[20px] w-[120px] rounded-[5px]")}>
      {["first", "prev", "back", "play", "next", "last"].map((n, i) => (
        <React.Fragment key={n}>{i > 0 && <Sep />}<div className={clsx("flex h-full flex-1 items-center justify-center", TOOL)}><Icon n={n} /></div></React.Fragment>
      ))}
    </div>
    <Menu className="ml-[5px] w-[115px]">No Sync</Menu>
    <div className={clsx(BOX, "ml-[16px] h-[20px] w-[20px] rounded-[5px]")}><IconBtn n="rec" className={clsx("w-[18px]", TOOL)} /></div>
    <div className={clsx(BOX, "ml-[5px] h-[20px] w-[171px] rounded-[5px]")}>
      <div className={clsx("flex flex-1 items-center pl-[3px]", FIELD)}><Icon n="keying" /></div>
      <Sep /><IconBtn n="key" className={clsx("w-[19px]", TOOL)} /><Sep /><IconBtn n="keyX" className={clsx("w-[19px]", TOOL)} />
    </div>
  </div>
);

/* ---------- outliner ---------- */

const Expand = () => (
  <svg viewBox="0 0 9 9" width="9" height="9" className="shrink-0">
    <circle cx="4.5" cy="4.5" r="3.9" fill="#e4e4e4" stroke="#222" strokeWidth=".9" />
    <path d="M4.5 2.3V6.7M2.3 4.5H6.7" stroke="#111" strokeWidth="1.1" />
  </svg>
);

const Toggles = () => (
  <div className="ml-auto flex h-full w-[59px] shrink-0 items-center">
    <Icon n="eye" s={14} className="ml-[2px]" /><Icon n="cursor" s={14} className="ml-[7px]" /><Icon n="camera" s={14} className="ml-[6px]" />
  </div>
);

const Outliner = () => (
  <div className="flex h-[116px] shrink-0 flex-col border-b border-black bg-[#727272]">
    <div className="flex h-[26px] shrink-0 items-center overflow-hidden border-t border-[#868686] bg-[#696969] pl-[9px]">
      <EditorSwitch icon="tree" />
      <T className="ml-[13px] w-[44px] shrink-0">View</T>
      <T className="w-[47px] shrink-0">Search</T>
      <div className={clsx(BOX, DARK, "h-[20px] w-[75px] items-center rounded-[5px] pl-[7px]")}><T>All Scenes</T></div>
    </div>
    <div className="flex h-[73px] shrink-0 border-t border-[#868686]">
      <div className="relative flex w-[192px] shrink-0 flex-col overflow-hidden pt-[3px]">
        <div className="absolute top-0 left-[28px] h-[72px] w-px bg-[#444]" />
        <div className="flex h-[20px] shrink-0 items-center bg-[#7a7a7a] pl-[29px]">
          <Expand /><Icon n="layers" className="ml-[4px]" /><T className="ml-[3px]">RenderLayers</T>
        </div>
        <div className="flex h-[20px] shrink-0 items-center pl-[41px]">
          <span className="flex rounded-full bg-[#9a9aaa] p-[1px]"><Icon n="world" s={15} /></span><T className="ml-[3px]">World</T>
        </div>
        <div className="relative flex h-[20px] shrink-0 items-center bg-[#7a7a7a] pl-[24px]">
          <Expand /><span className="h-px w-[8px] bg-[#444]" /><Icon n="Camera" className="ml-px" />
          <T className="ml-[3px]">Camera</T><span className="ml-[10px] h-[11px] w-px bg-[#444]" />
          <span className="ml-[7px] flex w-[14px] overflow-hidden"><Icon n="cameraGrey" /></span><Toggles />
        </div>
        <div className="relative flex h-[20px] shrink-0 items-center pl-[24px]">
          <Expand /><Icon n="meshActive" className="ml-[9px]" /><T className="ml-[3px] text-[#e4e4e4]">Cube</T>
          <span className="ml-[14px] h-[11px] w-px bg-[#444]" /><Icon n="meshG" className="ml-[10px]" /><Toggles />
        </div>
        <div className="absolute top-0 left-[133px] h-[72px] w-px bg-[#555]" />
        <div className="absolute top-0 left-[153px] h-[72px] w-px bg-[#555]" />
        <div className="absolute top-0 left-[173px] h-[72px] w-px bg-[#555]" />
      </div>
      <div className="mt-[4px] h-[62px] w-[13px] rounded-full border border-[#484848] bg-[#565656] pt-[10px]">
        <div className="h-[36px] rounded-full bg-linear-to-r from-[#999] to-[#808080]" />
      </div>
    </div>
    <div className="mt-[-1px] ml-[4px] h-[13px] w-[184px] shrink-0 rounded-full border border-[#484848] bg-linear-to-b from-[#4c4c4c] to-[#5a5a5a]">
      <div className="h-full w-[116px] rounded-full bg-linear-to-b from-[#959595] to-[#7a7a7a]" />
    </div>
  </div>
);

/* ---------- properties ---------- */

const PTABS = ["camera", "layers", "scene", "world", "cubeO", "link", "wrench", "meshG"];

const Mini = ({ l, v }: { l: string; v: string }) => (
  <div className="flex flex-1 items-center justify-between pr-[6px] pl-[7px]">
    <Left /><span className="flex flex-1 pl-[3px]"><T>{l}</T></span><N className="pr-[4px]">{v}</N><Right />
  </div>
);

const MiniStack = ({ children, className }: Kids & { className?: string }) => (
  <div className={clsx(BOX, "w-[85px] flex-col rounded-[9px]", className)}>{children}</div>
);
const MRow = ({ children, last }: Kids & { last?: boolean }) => (
  <div className={clsx("flex flex-1", NUM, !last && "border-b border-[#2e2e2e]")}>{children}</div>
);

const Properties = () => (
  <div className="flex flex-1 flex-col overflow-hidden bg-[#727272]">
    <div className="flex h-[27px] shrink-0 items-center overflow-hidden border-t border-b border-[#868686] border-b-[#7c7c7c] bg-[#696969] pl-[9px]">
      <EditorSwitch icon="props" />
      <div className="ml-[9px] flex h-[20px] flex-1 overflow-hidden rounded-l-[5px] border border-r-0 border-[#2e2e2e]">
        {PTABS.map((n, i) => (
          <React.Fragment key={n}>
            {i > 0 && <Sep />}
            <div className={clsx("flex w-[19px] shrink-0 items-center justify-center", i === 0 ? "bg-[#5680c2]" : "bg-[#4b4b4b]")}>
              <Icon n={n} className={i === 0 ? "" : "opacity-75"} />
            </div>
          </React.Fragment>
        ))}
      </div>
    </div>
    <div className="flex flex-1 overflow-hidden">
      <div className="flex w-[187px] shrink-0 flex-col overflow-hidden pl-[5px]">
        <div className="flex h-[34px] shrink-0 items-center pl-[5px]">
          <Icon n="pin" /><Icon n="scene" className="ml-[6px]" /><T className="ml-[4px]">Scene</T>
        </div>
        <Rule />
        <Head open title="Render" className="pr-[5px] pl-[8px]" />
        <div className="mt-[9px] flex h-[45px] shrink-0 flex-col gap-[5px] pl-[3px]">
          <div className={clsx(BOX, TOOL, "h-[20px] w-[176px] items-center rounded-[5px]")}>
            <div className="flex w-[56px] shrink-0 items-center overflow-hidden pl-[3px]"><Icon n="cameraAdd" /><T className="ml-[-1px]">Render</T></div><Sep />
            <div className="flex w-[57px] shrink-0 items-center overflow-hidden pl-[3px]"><Icon n="clap" className="mr-[-2px]" /><T>Animati</T></div><Sep />
            <div className="flex items-center pl-[3px]"><Icon n="speaker" /><T className="ml-[3px]">Audio</T></div>
          </div>
          <div className="flex items-center">
            <T className="w-[63px] pl-[7px]">Display:</T>
            <div className={clsx(BOX, "h-[20px] w-[113px] rounded-[5px]")}>
              <div className={clsx("flex flex-1 items-center justify-between pr-[3px] pl-[7px]", DARK)}><T>Image Editor</T><UpDown /></div>
              <Sep /><IconBtn n="lockOpen" className={clsx("w-[19px]", TOOL)} />
            </div>
          </div>
        </div>
        <div className="h-[7px] shrink-0" />
        <Rule />
        <Head open title="Dimensions" className="pr-[5px] pl-[8px]" />
        <div className={clsx(BOX, "mt-[9px] ml-[3px] h-[20px] w-[176px] rounded-[5px]")}>
          <div className={clsx("flex flex-1 items-center justify-between pr-[3px] pl-[6px]", DARK)}><T>Render Presets</T><UpDown /></div>
          <Sep /><IconBtn n="plus" className={clsx("w-[19px]", TOOL)} /><Sep /><IconBtn n="minus" className={clsx("w-[19px]", TOOL)} />
        </div>
        <div className="mt-[5px] flex h-[162px] shrink-0 gap-[6px] pl-[3px]">
          <div className="flex w-[85px] flex-col">
            <Label className="pl-[7px]">Resolution:</Label>
            <MiniStack className="h-[60px]">
              <MRow><Mini l=" :" v="1920 px" /></MRow>
              <MRow><Mini l="Y:" v="1080 px" /></MRow>
              <div className="relative flex flex-1 items-center justify-center bg-linear-to-b from-[#a0a0a0] to-[#b3b3b3]">
                <div className="absolute inset-y-0 left-0 w-[44px] bg-linear-to-b from-[#6e6e6e] to-[#828282]" />
                <N className="relative ml-[27px]">50%</N>
              </div>
            </MiniStack>
            <Label className="pl-[7px]">Aspect Ratio:</Label>
            <MiniStack className="h-[40px]">
              <MRow><Mini l="X:" v="1.000" /></MRow>
              <MRow last><Mini l="Y:" v="1.000" /></MRow>
            </MiniStack>
            <div className="mt-[2px] flex h-[20px] items-center pl-[3px]">
              <Check /><T className="ml-[8px] w-[24px] pt-[3px]">B</T><Check dim /><T className="ml-[8px] pt-[3px] text-[#464646]">C</T>
            </div>
          </div>
          <div className="flex w-[85px] flex-col">
            <Label>Frame Range:</Label>
            <MiniStack className="h-[60px]">
              <MRow><Mini l="Start Fr:" v="1" /></MRow>
              <MRow><Mini l="End F:" v="250" /></MRow>
              <MRow last><Mini l="Frame S:" v="1" /></MRow>
            </MiniStack>
            <Label>Frame Rate:</Label>
            <Menu className="w-[85px]">24 fps</Menu>
            <Label>Time Remap...</Label>
            <div className={clsx(BOX, NUM, "h-[20px] w-[85px] rounded-[10px]")}>
              <div className="flex w-[41px] items-center justify-between px-[7px]"><Left /><N className="pl-[3px]">1</N><Right /></div><Sep />
              <div className="flex flex-1 items-center justify-between px-[7px]"><Left /><N>10</N><Right /></div>
            </div>
          </div>
        </div>
        <div className="h-[7px] shrink-0" />
        <Rule />
        <Head open title="Anti-Aliasing" check="on" className="pr-[5px] pl-[8px]" />
        <div className="mt-[9px] flex h-[20px] shrink-0 gap-[6px] pl-[3px]">
          <div className={clsx(BOX, "h-[20px] w-[85px] rounded-[5px]")}>
            {["5", "8", "11", "16"].map((s, i) => (
              <React.Fragment key={s}>
                {i > 0 && <Sep />}
                <div className={clsx("flex flex-1 items-center justify-center", i === 1 ? "bg-linear-to-b from-[#4a74b6] to-[#6490d4]" : DARK)}><N>{s}</N></div>
              </React.Fragment>
            ))}
          </div>
          <Menu className="w-[85px]">Mitchell-N...</Menu>
        </div>
        <div className="mt-[2px] flex h-[20px] shrink-0 items-center pl-[6px]">
          <Check /><T className="ml-[8px] w-[66px]">Full Sampl</T>
          <div className={clsx(BOX, NUM, "h-[20px] w-[85px] rounded-[10px]")}><Mini l=" :" v="1.000 px" /></div>
        </div>
        <div className="h-[7px] shrink-0" />
        <Rule />
        <Head title="Sampled Motion Blur" check="off" className="pr-[5px] pl-[8px]" />
        <Rule />
        <Head title="Shading" className="pr-[5px] pl-[8px]" />
        <Rule />
        <Head title="Performance" className="pr-[5px] pl-[8px]" />
        <Rule />
        <Head title="Post Processing" className="pr-[5px] pl-[8px]" />
        <Rule />
        <Head title="Stamp" check="off" className="pr-[5px] pl-[8px]" />
        <Rule />
        <Head open title="Output" className="pr-[5px] pl-[8px]" />
      </div>
      <Scroll className="mt-[4px] ml-[6px] h-[552px] w-[12px]" thumb="h-[397px]" />
    </div>
  </div>
);

/* ---------- add menu ---------- */

type Item = { i: string; t: string; u: number; sub?: boolean; on?: boolean } | null;
const ADD: Item[] = [
  { i: "Mesh", t: "Mesh", u: 0, sub: true, on: true },
  { i: "Curve", t: "Curve", u: 0, sub: true },
  { i: "Surface", t: "Surface", u: 0, sub: true },
  { i: "Metaball", t: "Metaball", u: 4, sub: true },
  { i: "Text", t: "Text", u: 0 },
  null,
  { i: "Armature", t: "Armature", u: 0, sub: true },
  { i: "Lattice", t: "Lattice", u: 0 },
  { i: "Empty", t: "Empty", u: 0, sub: true },
  null,
  { i: "Speaker", t: "Speaker", u: 1 },
  null,
  { i: "Camera", t: "Camera", u: 4 },
  { i: "Lamp", t: "Lamp", u: 8, sub: true },
  null,
  { i: "Empty", t: "Force Field", u: 0, sub: true },
  null,
  { i: "Empty", t: "Group Instance", u: 0, sub: true },
];
const SUB: Item[] = [
  { i: "Plane", t: "Plane", u: 0 },
  { i: "Cube", t: "Cube", u: 0 },
  { i: "Circle", t: "Circle", u: 2 },
  { i: "UV", t: "UV Sphere", u: 0 },
  { i: "Ico", t: "Ico Sphere", u: 0 },
  { i: "Cylinder", t: "Cylinder", u: 1 },
  { i: "Cone", t: "Cone", u: 1 },
  { i: "Torus", t: "Torus", u: 0 },
  null,
  { i: "Grid", t: "Grid", u: 0 },
  { i: "Monkey", t: "Monkey", u: 0 },
];

const Items = ({ items, gap, pad }: { items: Item[]; gap: string; pad: string }) => (
  <>
    {items.map((m, k) =>
      m === null ? (
        <div key={k} className="flex h-[9px] items-center"><div className="h-px w-full bg-[#484848]" /></div>
      ) : (
        <div key={k} className={clsx("mx-[1px] flex h-[20px] items-center pr-[5px]", pad, m.on && "bg-linear-to-b from-[#7aa3e6] to-[#5680c2] bg-[length:100%_18px] bg-no-repeat")}>
          {m.i === "Text" ? (
            <span className="w-[15px] pb-[1px] text-center font-['Liberation_Serif',serif] text-[17px] leading-[17px] text-[#f9b060] [-webkit-text-stroke:0.3px_#f9b060]">F</span>
          ) : (
            <Icon n={m.i} s={15} className="mb-[2px]" />
          )}
          <span className={clsx("flex-1 pt-[1px] leading-[19px] tracking-[-0.5px] whitespace-pre", gap, m.on ? "text-black" : "text-white")}>
            {m.t.slice(0, m.u)}
            <span className={clsx("border-b leading-[12px]", m.on ? "border-[#333]" : "border-[#999]")}>{m.t.slice(m.u, m.u + 1)}</span>
            {m.t.slice(m.u + 1)}
          </span>
          {m.sub && (
            <svg viewBox="0 0 6 9" width="6" height="9"><path d="M.5 .5 5.5 4.5 .5 8.5Z" fill={m.on ? "#7d9fd0" : "#777"} stroke={m.on ? "#3c5580" : "#444"} strokeWidth=".6" /></svg>
          )}
        </div>
      ),
    )}
  </>
);

/* ---------- annotations ---------- */

const PALE = "text-[#dd3c3c]";
const NOTES = [
  { t: "\\ / Screen Layout >CTRL+šipky doprava(doleva)<", p: "left-[289px] top-[5px] text-[#ff0000]", w: 456 },
  { t: "/ \\ Pohled (View)", p: `left-[187px] top-[88px] ${PALE}`, w: 153 },
  { t: "<Tool Shelf >T<", p: "left-[172px] top-[175px] text-[#ea1010]", w: 147 },
  { t: "Camera >0< >", p: `left-[187px] top-[264px] ${PALE}`, w: 138 },
  { t: "Kostka >", p: `left-[449px] top-[369px] ${PALE}`, w: 79 },
  { t: "Světlo >", p: `left-[572px] top-[169px] ${PALE}`, w: 76 },
  { t: "3d Cursor >", p: `left-[535px] top-[306px] ${PALE}`, w: 108 },
  { t: "< Origin", p: `left-[573px] top-[352px] ${PALE}`, w: 74 },
  { t: "Properties >N<  >", p: `left-[806px] top-[58px] ${PALE}`, w: 166 },
  { t: "Pozice vybraného objektu >", p: `left-[721px] top-[91px] ${PALE}`, w: 251 },
  { t: "Otočení vybraného objektu >", p: `left-[709px] top-[171px] ${PALE}`, w: 263 },
  { t: "Škálování vybraného objektu >", p: `left-[689px] top-[277px] ${PALE}`, w: 283 },
  { t: "< Vložení >Shift-A<", p: `left-[745px] top-[303px] ${PALE}`, w: 180 },
  { t: "\\ / Orientace os souřadnicového systému", p: "left-[187px] top-[579px] text-[#ff0000]", w: 368 },
  { t: "< Vybraný objekt", p: "left-[292px] top-[642px] text-[#ff0000]", w: 157 },
];

/* Area-split handles: the upper-right and lower-left hatch marks. */
const CornerTR = ({ at }: { at: string }) => (
  <svg viewBox="0 0 11 11" width="11" height="11" className={clsx("absolute", at)}>
    <path d="M0 0 11 11M4 0 11 7M8 0 11 3" stroke="#c0c0c0" strokeWidth=".8" />
    <path d="M1.5 0 11 9.5M5.5 0 11 5.5" stroke="#222" strokeWidth=".9" />
  </svg>
);
const CornerBL = ({ at }: { at: string }) => (
  <svg viewBox="0 0 11 11" width="11" height="11" className={clsx("absolute", at)}>
    <path d="M0 0 11 11M0 4 7 11M0 8 3 11" stroke="#c0c0c0" strokeWidth=".8" />
    <path d="M0 1.5 9.5 11M0 5.5 5.5 11" stroke="#222" strokeWidth=".9" />
  </svg>
);

export default function App() {
  return (
    <div className="relative flex h-[768px] w-[1366px] flex-col overflow-hidden border border-b-0 border-[#358a5c] bg-[#43a771] font-['DejaVu_Sans',sans-serif] text-[11px] leading-[14px] text-black">
      {/* title bar */}
      <div className="relative flex h-[30px] shrink-0 items-start">
        <Icon n="blender" className="mt-[6px] ml-[9px]" />
        <span className="mt-[5px] ml-[631px] font-['Noto_Sans',sans-serif] text-[13px] leading-[18px] text-[#16432d]">Blender</span>
        <div className="ml-auto flex items-start">
          <div className="mt-[12px] h-[2px] w-[8px] bg-[#1b1b1b]" />
          <div className="mt-[6px] ml-[18px] h-[8px] w-[10px] border border-t-2 border-[#1b1b1b]" />
          <div className="mr-[6px] ml-[8px] flex h-[20px] w-[45px] items-center justify-center bg-[#c75050]">
            <svg viewBox="0 0 8 8" width="8" height="8"><path d="M.5 .5 7.5 7.5M7.5 .5 .5 7.5" stroke="#fff" strokeWidth="1.8" /></svg>
          </div>
        </div>
      </div>

      {/* application */}
      <div className="mx-[7px] flex h-[729px] w-[1350px] shrink-0 flex-col bg-[#727272]">
        <div className="h-px shrink-0 bg-[#5a5a5a]" />
        <InfoBar />
        <div className="flex flex-1 overflow-hidden">
          <div className="flex w-[1140px] shrink-0 flex-col">
            <div className="flex h-[609px] shrink-0">
              <ToolShelf />
              <Viewport />
              <NPanel />
            </div>
            <ViewHeader />
            <Timeline />
            <TimelineHeader />
          </div>
          <div className="w-px shrink-0 bg-black" />
          <div className="flex flex-1 flex-col overflow-hidden">
            <Outliner />
            <Properties />
          </div>
        </div>
      </div>

      {/* edge of the desktop taskbar */}
      <div className="mt-[6px] flex h-[2px] bg-[#2f7a52]">
        <div className="ml-[279px] w-[53px] bg-[#8cc7a6]" />
        <div className="ml-[624px] w-[53px] bg-[#8cc7a6]" />
        <div className="ml-[3px] w-[53px] bg-white" />
      </div>

      <CornerBL at="left-[7px] top-[45px]" />
      <CornerBL at="left-[7px] top-[681px]" />
      <CornerBL at="left-[7px] top-[748px]" />
      <CornerBL at="left-[1148px] top-[161px]" />
      <CornerBL at="left-[1148px] top-[748px]" />
      <CornerTR at="left-[1345px] top-[32px]" />
      <CornerTR at="left-[1345px] top-[59px]" />
      <CornerTR at="left-[1345px] top-[175px]" />
      <CornerTR at="left-[1135px] top-[59px]" />
      <CornerTR at="left-[1135px] top-[695px]" />

      {/* add menu */}
      <div className="absolute top-[296px] left-[700px] w-[126px] rounded-[5px] border border-[#101010] bg-[#1b1b1b] pb-[3px] shadow-[2px_3px_8px_rgba(0,0,0,0.5)]">
        <div className="flex h-[30px] items-center border-b border-[#484848] pl-[8px]"><T className="text-[#8f8f8f]">Add</T></div>
        <div className="h-[4px]" />
        <Items items={ADD} pad="pl-[7px]" gap="ml-[7px]" />
      </div>
      <div className="absolute top-[326px] left-[826px] w-[123px] rounded-r-[5px] rounded-bl-[5px] border border-[#101010] bg-[#1b1b1b] pt-[4px] pb-[2px] shadow-[2px_3px_8px_rgba(0,0,0,0.5)]">
        <Items items={SUB} pad="pl-[5px]" gap="ml-[7px]" />
      </div>

      {NOTES.map((n) => (
        <div key={n.t} className={clsx("absolute mt-[-1px] ml-[-1px] flex h-[22px] items-center text-[18px] leading-[22px]", n.p)}>
          <Fit text={n.t} w={n.w} />
        </div>
      ))}
    </div>
  );
}
